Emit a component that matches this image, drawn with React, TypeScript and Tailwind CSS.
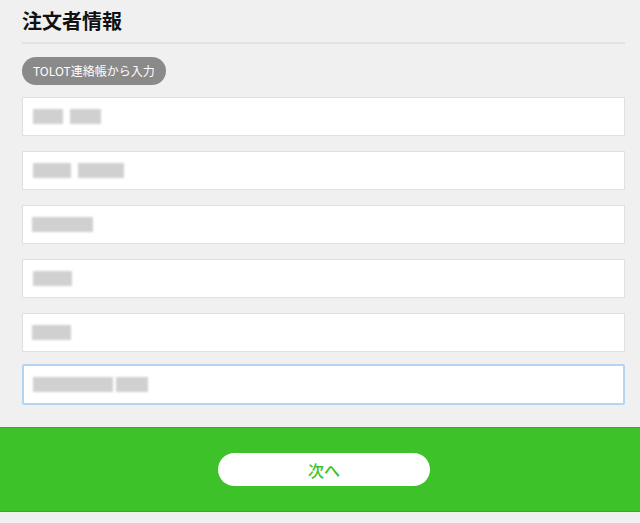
const rows: { blocks: [number, number][] }[] = [
  { blocks: [[10, 30], [47, 31]] },
  { blocks: [[10, 38], [55, 46]] },
  { blocks: [[9, 61]] },
  { blocks: [[10, 39]] },
  { blocks: [[9, 39]] },
];

function Blur({ blocks }: { blocks: [number, number][] }) {
  return (
    <div className="relative h-[15px] w-full">
      {blocks.map(([x, w], i) => (
        <div
          key={i}
          className="absolute top-0 h-[15px] bg-[#d0d0d0] blur-[1px]"
          style={{ left: x, width: w }}
        />
      ))}
    </div>
  );
}

export default function App() {
  return (
    <div
      className="w-[640px] h-[523px] bg-[#f0f0f0] overflow-hidden"
      style={{ fontFamily: '"Noto Sans CJK JP", "Noto Sans", sans-serif' }}
    >
      <div className="pl-[22px] pr-[15px] pt-[6px]">
        <h1 className="text-[20px] font-bold text-[#111] leading-[30px]">注文者情報</h1>
        <div className="mt-[6px] h-[2px] bg-[#e2e2e2]" />
        <button className="mt-[13px] h-[28px] px-[11px] rounded-full bg-[#8a8a8a] text-white text-[12px] leading-[28px]">
          TOLOT連絡帳から入力
        </button>
        <div className="mt-[12px] flex flex-col gap-[15px]">
          {rows.map((r, i) => (
            <div
              key={i}
              className="h-[39px] bg-white border border-[#e0e0e0] flex items-center"
            >
              <Blur blocks={r.blocks} />
            </div>
          ))}
          <div className="h-[41px] bg-white border-2 border-[#b3d4f3] rounded-[2px] flex items-center -mt-[3px]">
            <Blur blocks={[[9, 80], [92, 32]]} />
          </div>
        </div>
      </div>
      <div className="mt-[22px] h-[85px] bg-[#3dc22a] border-y border-[#2fae1f] flex items-center justify-center">
        <button className="ml-[8px] w-[212px] h-[33px] rounded-full bg-white text-[#3dc22a] text-[16px] font-medium">
          次へ
        </button>
      </div>
    </div>
  );
}
